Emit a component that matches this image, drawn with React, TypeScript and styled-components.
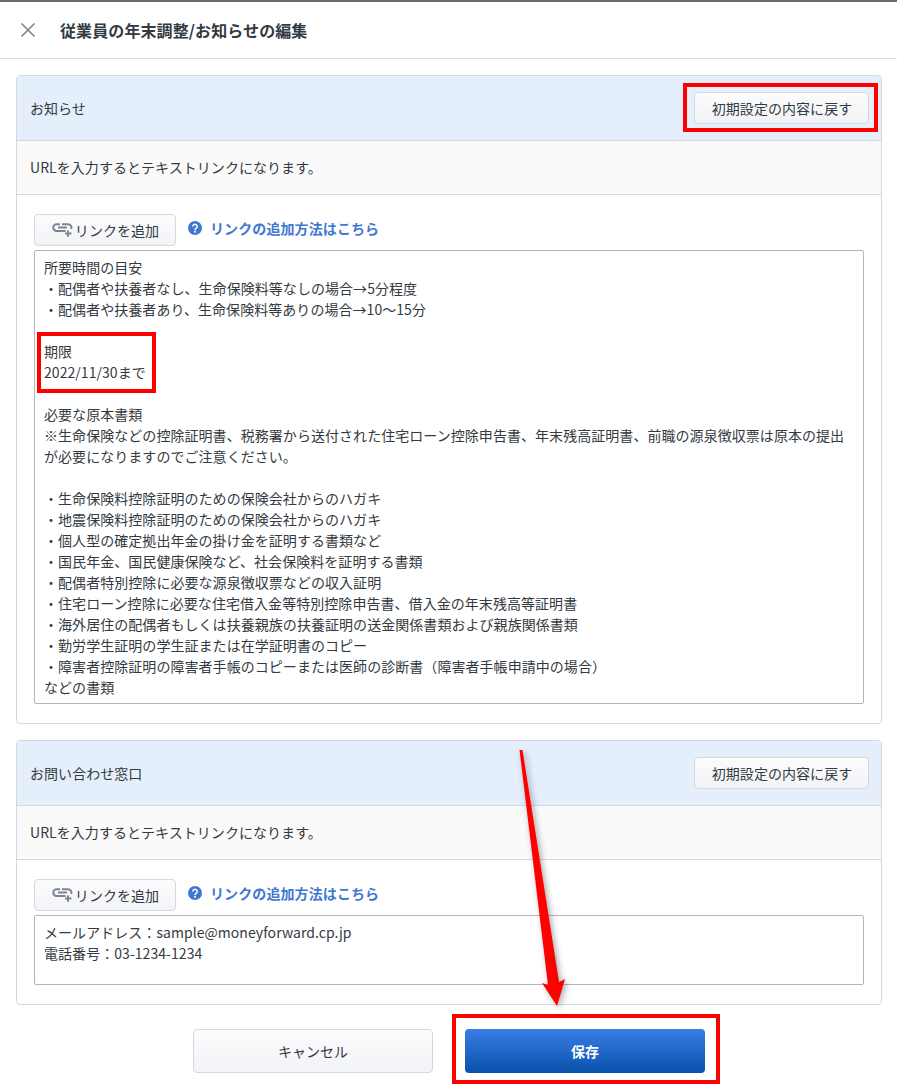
import React from 'react';
import styled, { createGlobalStyle } from 'styled-components';

const GlobalStyle = createGlobalStyle`
  html, body {
    margin: 0;
    padding: 0;
    background: #ffffff;
  }
  body {
    font-family: "Noto Sans CJK JP", "Noto Sans", sans-serif;
    font-size: 14px;
    letter-spacing: 0.05px;
    color: #333a42;
  }
`;

const Page = styled.div`
  position: relative;
  width: 897px;
  height: 1092px;
  overflow: hidden;
  border-top: 2px solid #6b6b6b;
  box-sizing: border-box;
`;

const Header = styled.header`
  display: flex;
  align-items: center;
  height: 57px;
  box-sizing: border-box;
  padding-left: 20px;
  border-bottom: 1px solid #dcdde0;
`;

const CloseButton = styled.span`
  display: flex;
  width: 16px;
  height: 16px;
  margin-right: 24px;
  color: #7d8494;
`;

const Title = styled.h1`
  margin: 0;
  font-size: 16px;
  font-weight: 700;
  line-height: 22px;
  letter-spacing: 0.1px;
  color: #333a42;
`;

const Content = styled.main`
  display: flex;
  flex-direction: column;
  gap: 16px;
  padding: 16px 15px 0 16px;
`;

const Panel = styled.section`
  border: 1px solid #d5d8df;
  border-radius: 4px;
  overflow: hidden;
`;

const PanelHead = styled.div`
  display: flex;
  align-items: center;
  justify-content: space-between;
  height: 65px;
  box-sizing: border-box;
  padding: 0 12px 0 13px;
  background: #e5effc;
  border-bottom: 1px solid #d5d8df;
`;

const PanelNote = styled.div`
  display: flex;
  align-items: center;
  height: 54px;
  box-sizing: border-box;
  padding: 0 0 2px 13px;
  background: #fafafa;
  border-bottom: 1px solid #d5d8df;
`;

const PanelBody = styled.div`
  padding: 19px 17px 19px 17px;
`;

const Toolbar = styled.div`
  display: flex;
  align-items: center;
  margin-bottom: 4px;
`;

const Button = styled.button`
  display: flex;
  align-items: center;
  justify-content: center;
  box-sizing: border-box;
  border: 1px solid #d5d8df;
  border-radius: 4px;
  background: linear-gradient(#fcfcfd, #f2f3f6);
  font: inherit;
  letter-spacing: inherit;
  color: #333a42;
  padding: 0;
`;

const ResetButton = styled(Button)`
  width: 175px;
  height: 32px;
  padding-left: 1px;
`;

const AddLinkButton = styled(Button)`
  width: 142px;
  height: 32px;
  gap: 2px;
  padding-left: 1px;
`;

const LinkIcon = styled.svg`
  width: 21px;
  height: 14px;
  color: #7d8494;
`;

const HelpLink = styled.a`
  display: flex;
  align-items: center;
  gap: 8px;
  margin: -5px 0 0 12px;
  font-weight: 700;
  letter-spacing: 0.1px;
  color: #3f78d1;
  text-decoration: none;
`;

const HelpIcon = styled.svg`
  width: 14px;
  height: 14px;
`;

const TextBox = styled.div<{ $height: number }>`
  height: ${(p) => p.$height}px;
  box-sizing: border-box;
  padding: 6px 9px;
  border: 1px solid #b4b6ba;
  border-radius: 2px;
  line-height: 21px;
  white-space: pre-wrap;
  overflow: hidden;
`;

const Footer = styled.footer`
  display: flex;
  justify-content: center;
  gap: 32px;
  margin-top: 24px;
  padding-left: 1px;
`;

const CancelButton = styled(Button)`
  width: 240px;
  height: 44px;
`;

const SaveButton = styled(Button)`
  width: 240px;
  height: 44px;
  border: none;
  background: linear-gradient(#3a7de6, #0a52ab);
  color: #ffffff;
  font-weight: 700;
`;

const Highlight = styled.div<{ $x: number; $y: number; $w: number; $h: number }>`
  position: absolute;
  left: ${(p) => p.$x}px;
  top: ${(p) => p.$y}px;
  width: ${(p) => p.$w}px;
  height: ${(p) => p.$h}px;
  box-sizing: border-box;
  border: 4px solid #ff0000;
`;

const Arrow = styled.svg`
  position: absolute;
  left: 500px;
  top: 743px;
  width: 90px;
  height: 270px;
  filter: drop-shadow(2px 2px 3px rgba(0, 0, 0, 0.35));
`;

const noticeText = `所要時間の目安
・配偶者や扶養者なし、生命保険料等なしの場合→5分程度
・配偶者や扶養者あり、生命保険料等ありの場合→10〜15分

期限
2022/11/30まで

必要な原本書類
※生命保険などの控除証明書、税務署から送付された住宅ローン控除申告書、年末残高証明書、前職の源泉徴収票は原本の提出が必要になりますのでご注意ください。

・生命保険料控除証明のための保険会社からのハガキ
・地震保険料控除証明のための保険会社からのハガキ
・個人型の確定拠出年金の掛け金を証明する書類など
・国民年金、国民健康保険など、社会保険料を証明する書類
・配偶者特別控除に必要な源泉徴収票などの収入証明
・住宅ローン控除に必要な住宅借入金等特別控除申告書、借入金の年末残高等証明書
・海外居住の配偶者もしくは扶養親族の扶養証明の送金関係書類および親族関係書類
・勤労学生証明の学生証または在学証明書のコピー
・障害者控除証明の障害者手帳のコピーまたは医師の診断書（障害者手帳申請中の場合）
などの書類`;

const contactText = `メールアドレス：sample@moneyforward.cp.jp
電話番号：03-1234-1234`;

const LinkToolbar = () => (
  <Toolbar>
    <AddLinkButton>
      <LinkIcon viewBox="0 0 21 14" fill="none" stroke="currentColor" strokeWidth="2">
        <path d="M8 1.2H4.6a3.4 3.4 0 0 0 0 6.8h9" />
        <path d="M6 4.6h9" />
        <path d="M10 1.2h6a3.4 3.4 0 0 1 3.2 4.6" />
        <path d="M16 7.5v6.3M13 10.6h6.5" />
      </LinkIcon>
      リンクを追加
    </AddLinkButton>
    <HelpLink href="#">
      <HelpIcon viewBox="0 0 14 14">
        <circle cx="7" cy="7" r="7" fill="#3f78d1" />
        <path d="M4.8 5.4a2.2 2.2 0 1 1 3.4 1.9c-.8.5-1.2.8-1.2 1.6" fill="none" stroke="#fff" strokeWidth="1.5" />
        <circle cx="7" cy="10.8" r="1" fill="#fff" />
      </HelpIcon>
      リンクの追加方法はこちら
    </HelpLink>
  </Toolbar>
);

function App() {
  return (
    <Page>
      <GlobalStyle />
      <Header>
        <CloseButton>
          <svg viewBox="0 0 16 16" width="16" height="16" fill="none" stroke="currentColor" strokeWidth="1.6">
            <path d="M1.5 1.5l13 13M14.5 1.5l-13 13" />
          </svg>
        </CloseButton>
        <Title>従業員の年末調整/お知らせの編集</Title>
      </Header>
      <Content>
        <Panel>
          <PanelHead>
            お知らせ
            <ResetButton>初期設定の内容に戻す</ResetButton>
          </PanelHead>
          <PanelNote>URLを入力するとテキストリンクになります。</PanelNote>
          <PanelBody>
            <LinkToolbar />
            <TextBox $height={454}>{noticeText}</TextBox>
          </PanelBody>
        </Panel>
        <Panel>
          <PanelHead>
            お問い合わせ窓口
            <ResetButton>初期設定の内容に戻す</ResetButton>
          </PanelHead>
          <PanelNote>URLを入力するとテキストリンクになります。</PanelNote>
          <PanelBody>
            <LinkToolbar />
            <TextBox $height={70}>{contactText}</TextBox>
          </PanelBody>
        </Panel>
      </Content>
      <Footer>
        <CancelButton>キャンセル</CancelButton>
        <SaveButton>保存</SaveButton>
      </Footer>
      <Highlight $x={683} $y={81} $w={195} $h={49} />
      <Highlight $x={37} $y={330} $w={119} $h={61} />
      <Highlight $x={452} $y={1012} $w={268} $h={70} />
      <Arrow viewBox="0 0 90 270">
        <polygon points="19.5,5 22.5,5 59,237 65,234 57,261 42,238 48,240" fill="#ff0000" />
      </Arrow>
    </Page>
  );
}

export default App;
